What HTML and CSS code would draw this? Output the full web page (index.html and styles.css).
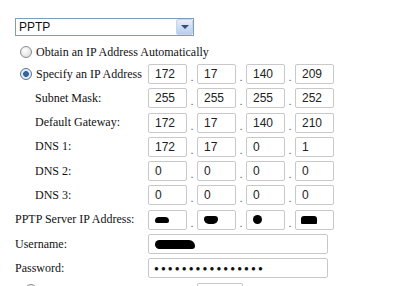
FILE: index.html
```html
<!DOCTYPE html>
<html>
	<head>
		<meta charset="UTF-8">
		<title>PPTP</title>
		<link rel="stylesheet" href="styles.css">
	</head>
	<body>
		<div class="wan">
			<div class="sel">
				<span class="sel-text">PPTP</span>
				<span class="sel-btn"><i></i></span>
			</div>
			<div class="radio-row first">
				<span class="radio"></span>
				<span>Obtain an IP Address Automatically</span>
			</div>
			<div class="form">
				<div class="lbl radio-row"><span class="radio on"></span><span>Specify an IP Address</span></div>
				<div class="ip"><span class="box">172</span><b>.</b><span class="box">17</span><b>.</b><span class="box">140</span><b>.</b><span class="box">209</span></div>

				<div class="lbl ind">Subnet Mask:</div>
				<div class="ip"><span class="box">255</span><b>.</b><span class="box">255</span><b>.</b><span class="box">255</span><b>.</b><span class="box">252</span></div>

				<div class="lbl ind">Default Gateway:</div>
				<div class="ip"><span class="box">172</span><b>.</b><span class="box">17</span><b>.</b><span class="box">140</span><b>.</b><span class="box">210</span></div>

				<div class="lbl ind">DNS 1:</div>
				<div class="ip"><span class="box">172</span><b>.</b><span class="box">17</span><b>.</b><span class="box">0</span><b>.</b><span class="box">1</span></div>

				<div class="lbl ind">DNS 2:</div>
				<div class="ip"><span class="box">0</span><b>.</b><span class="box">0</span><b>.</b><span class="box">0</span><b>.</b><span class="box">0</span></div>

				<div class="lbl ind">DNS 3:</div>
				<div class="ip"><span class="box">0</span><b>.</b><span class="box">0</span><b>.</b><span class="box">0</span><b>.</b><span class="box">0</span></div>

				<div class="lbl">PPTP Server IP Address:</div>
				<div class="ip">
					<span class="box"><i class="blot b1"></i></span><b>.</b>
					<span class="box"><i class="blot b2"></i></span><b>.</b>
					<span class="box"><i class="blot b3"></i></span><b>.</b>
					<span class="box"><i class="blot b4"></i></span>
				</div>

				<div class="lbl">Username:</div>
				<div><span class="box wide"><i class="blot b5"></i></span></div>

				<div class="lbl">Password:</div>
				<div><span class="box wide pw">&#9679;&#9679;&#9679;&#9679;&#9679;&#9679;&#9679;&#9679;&#9679;&#9679;&#9679;&#9679;&#9679;&#9679;&#9679;&#9679;</span></div>

				<div class="lbl radio-row last"><span class="radio"></span></div>
				<div class="last"><span class="box small"></span></div>
			</div>
		</div>
	</body>
</html>
```

FILE: styles.css
```css
* {margin:0; padding:0; box-sizing:border-box;}
html, body {overflow:hidden;}
body {background:#fff; font-family:"Liberation Serif", serif; font-size:12px; color:#111; height:286px;}
.wan {padding:18px 0 0 15px; height:286px; overflow:hidden;}

.sel {width:179px; height:18px; border:1px solid #7f9db9; display:flex; background:#fff;}
.sel-text {flex:1; font-family:"Liberation Sans", sans-serif; font-size:12px; line-height:16px; padding-left:3px; color:#111;}
.sel-btn {width:17px; height:16px; background:linear-gradient(#e4eefb, #b7cdf0); border:1px solid #c3d3f0; border-radius:2px; display:flex; align-items:center; justify-content:center;}
.sel-btn i {width:0; height:0; border-left:4px solid transparent; border-right:4px solid transparent; border-top:4px solid #3d4f6e;}

.radio-row {display:flex; align-items:center; gap:4px;}
.radio-row.first {height:20px; margin-top:6px; padding-left:5px; margin-bottom:2px;}
.radio {width:12px; height:12px; border-radius:50%; border:1px solid #8c8c8c; background:radial-gradient(circle at 40% 35%, #fff, #d6d6d6);}
.radio.on {border-color:#5a7590; background:radial-gradient(circle, #3c6fb0 0, #2a5a9c 2.5px, #dfe8f2 3.2px, #f4f7fb 100%);}

.form {display:grid; grid-template-columns:133px 200px; grid-auto-rows:20px; row-gap:4.3px; align-items:center;}
.lbl.radio-row {padding-left:5px;}
.lbl.ind {padding-left:20px;}
.last {align-self:start;}
.lbl.last {padding-left:10px; padding-top:1px;}

.ip {display:flex; align-items:flex-end;}
.ip b {width:10px; font-weight:normal; text-align:center; font-family:"Liberation Sans", sans-serif; font-size:11px; line-height:14px; color:#555;}
.box {display:flex; align-items:center; width:39px; height:20px; border:1px solid #c9c9c9; border-radius:2px; padding-left:6px; font-family:"Liberation Sans", sans-serif; font-size:12px; color:#222; background:#fff;}
.box.wide {width:180px;}
.box.small {width:46px; margin-left:49px;}
.pw {font-size:8px; letter-spacing:2.1px; padding-left:5px; color:#111;}

.blot {display:block; background:#000;}
.b1 {width:14px; height:6px; border-radius:4px 4px 2px 2px;}
.b2 {width:14px; height:8px; border-radius:4px 4px 6px 6px;}
.b3 {width:9px; height:9px; border-radius:50%;}
.b4 {width:16px; height:8px; border-radius:3px 3px 1px 1px; margin-left:-1px;}
.b5 {width:40px; height:9px; border-radius:6px 8px 4px 6px;}
```
